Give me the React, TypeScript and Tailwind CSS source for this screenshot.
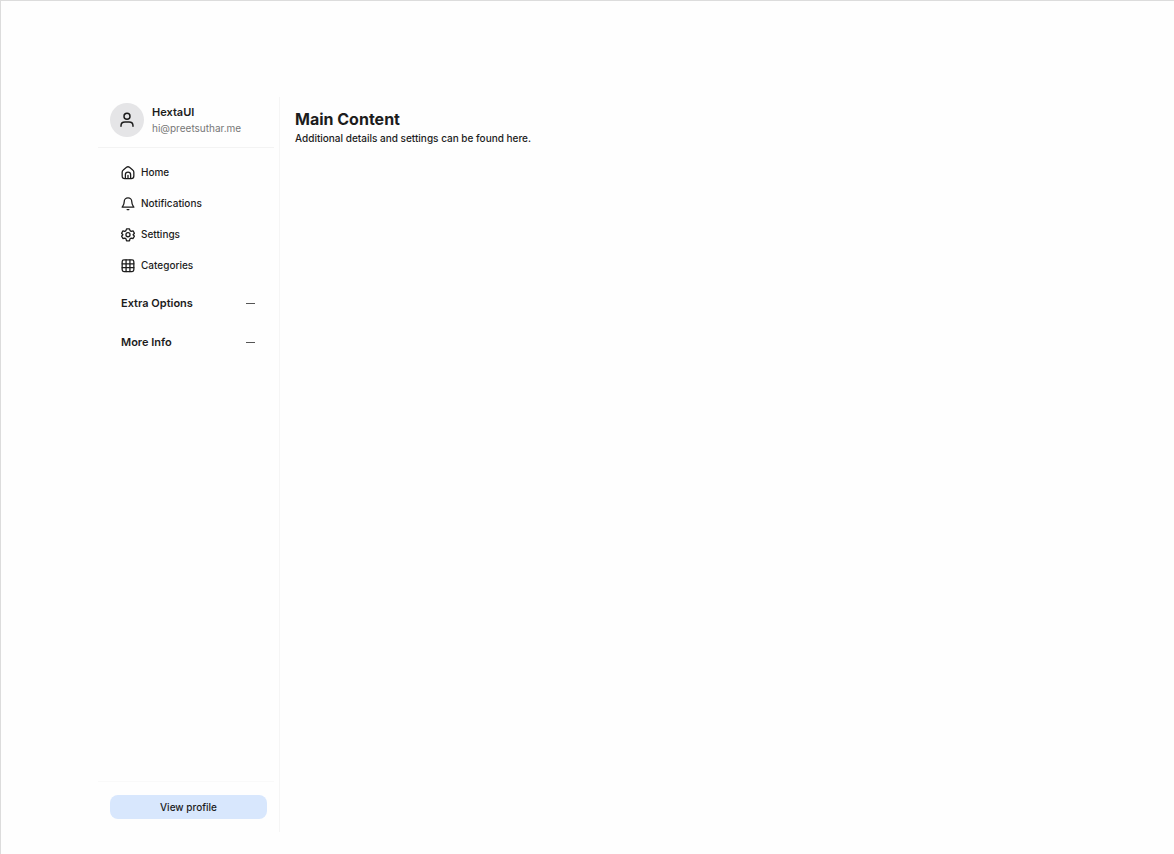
import type { ReactNode } from "react";
import { useState } from "react";

interface IconProps {
  children: ReactNode;
  className?: string;
}

function Icon({ children, className = "size-[14px]" }: IconProps) {
  return (
    <svg
      viewBox="0 0 24 24"
      fill="none"
      stroke="currentColor"
      strokeWidth="2.2"
      strokeLinecap="round"
      strokeLinejoin="round"
      className={className}
      aria-hidden="true"
    >
      {children}
    </svg>
  );
}

const navItems = [
  {
    label: "Home",
    icon: (
      <Icon>
        <path d="M2 10.500c0-1.500.7-2.700 1.900-3.600l5.600-4.600c1.500-1.200 3.500-1.200 5 0l5.600 4.600c1.200.9 1.900 2.100 1.900 3.600V17c0 3-1.500 4.500-4.500 4.500h-11C3.500 21.500 2 20 2 17z" />
        <path d="M7.500 21v-6a4.500 4.500 0 0 1 9 0v6M12 16v5" />
      </Icon>
    ),
  },
  {
    label: "Notifications",
    icon: (
      <Icon>
        <path d="M12 1.500A6.500 6.500 0 0 0 5.500 8c0 5-1.500 6.500-3.500 9.500h20c-2-3-3.500-4.500-3.500-9.500A6.500 6.500 0 0 0 12 1.500z" />
        <path d="M10.500 21.500h3" />
      </Icon>
    ),
  },
  {
    label: "Settings",
    icon: (
      <Icon>
        <path d="M9.500 1.500h5l1 3 2 1.200 3.200-.7 2.300 4L20.800 11.500l2.200 2.500-2.300 4-3.200-.7-2 1.200-1 3.500h-5l-1-3.500-2-1.200-3.200.7L1 14l2.200-2.500L1 9l2.300-4 3.200.7 2-1.200z" />
        <circle cx="12" cy="11.500" r="3.500" />
      </Icon>
    ),
  },
  {
    label: "Categories",
    icon: (
      <Icon>
        <rect x="2" y="1.500" width="20" height="20" rx="3" />
        <path d="M8.700 1.500v20M15.300 1.500v20M2 8.200h20M2 14.800h20" />
      </Icon>
    ),
  },
];

const sections = ["Extra Options", "More Info"];

function SectionToggle({ label }: { label: string }) {
  const [open, setOpen] = useState(false);

  return (
    <button
      type="button"
      aria-expanded={open}
      onClick={() => setOpen(!open)}
      className="flex h-[39px] w-full items-center justify-between pr-[19px] pl-[23px] text-[11px] font-semibold"
    >
      {label}
      <span className="h-px w-[9px] bg-[#555]" />
    </button>
  );
}

function Sidebar() {
  return (
    <aside className="flex w-[182px] shrink-0 flex-col border-r border-[#f5f5f5] pr-[5px]">
      {/* Account */}
      <div className="flex items-center gap-2 border-b border-[#f3f3f3] px-3 pt-[6px] pb-[10px]">
        <div className="flex size-[34px] items-center justify-center rounded-full bg-[#e5e5e7]">
          <Icon className="size-4">
            <circle cx="12" cy="6.500" r="4.500" />
            <path d="M3 21.500v-1c0-3.500 2.500-5.500 6-5.500h6c3.500 0 6 2 6 5.500v1" />
          </Icon>
        </div>
        <div>
          <p className="text-[11px] leading-4 font-semibold">HextaUI</p>
          <p className="text-[10px] leading-4 text-[#777]">hi@preetsuthar.me</p>
        </div>
      </div>

      {/* Navigation */}
      <nav className="flex-1 pt-[9px]">
        <ul>
          {navItems.map((item) => (
            <li key={item.label}>
              <a
                href="#"
                className="flex h-[31px] items-center gap-[6px] px-[23px] text-[10px] font-medium"
              >
                {item.icon}
                {item.label}
              </a>
            </li>
          ))}
        </ul>
        <div className="pt-[3px]">
          {sections.map((label) => (
            <SectionToggle key={label} label={label} />
          ))}
        </div>
      </nav>

      <div className="border-t border-[#f9f9f9] pt-[11px] pr-[7px] pb-[13px] pl-3">
        <button
          type="button"
          className="h-6 w-full rounded-lg bg-[#d8e7fd] text-[10px] font-medium"
        >
          View profile
        </button>
      </div>
    </aside>
  );
}

export default function App() {
  return (
    <div className="flex min-h-screen border-t border-l border-[#dcdcdc] bg-[#fefefe] pt-24 pb-[22px] pl-[97px] font-['Inter',sans-serif] text-[#1c1c1c]">
      <Sidebar />
      <main className="flex-1 px-[15px] pt-3">
        <h1 className="text-[16px] leading-[21px] font-bold">Main Content</h1>
        <p className="text-[10px] leading-4 font-medium">
          Additional details and settings can be found here.
        </p>
      </main>
    </div>
  );
}
